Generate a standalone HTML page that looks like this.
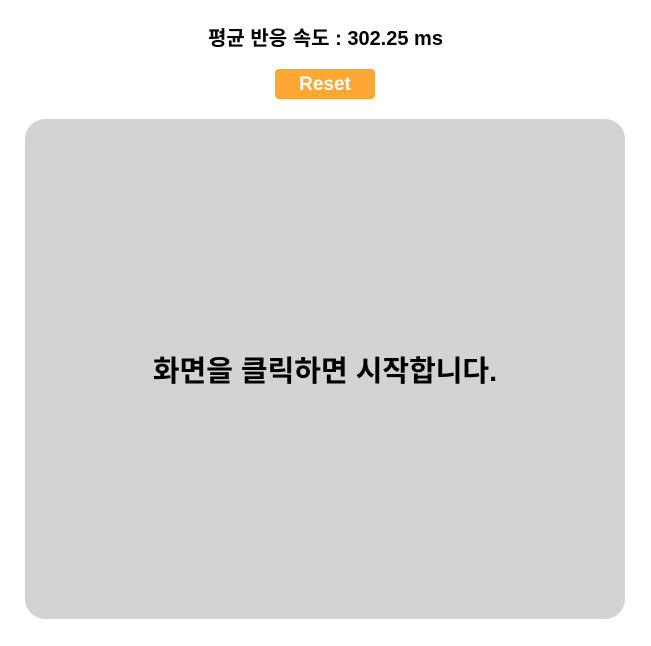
<!DOCTYPE html>
<html><head><meta charset="utf-8"><style>
body{margin:0;width:651px;height:646px;background:#fff;font-family:"Liberation Sans","Noto Sans CJK KR",sans-serif;position:relative;overflow:hidden}
.t{position:absolute;top:26px;left:0;width:651px;text-align:center;font-size:20px;font-weight:bold;color:#000;line-height:26px}
.b{position:absolute;left:275px;top:69px;width:100px;height:30px;background:#ffa733;border-radius:4px;color:#fff;font-weight:bold;font-size:19px;line-height:31px;text-align:center}
.box{position:absolute;left:25px;top:119px;width:600px;height:500px;background:#d3d3d3;border-radius:20px;display:flex;align-items:center;justify-content:center}
.box span{font-size:29px;font-weight:bold;color:#000;margin-top:0px}
</style></head><body>
<div class="t">평균 반응 속도 : 302.25 ms</div>
<div class="b">Reset</div>
<div class="box"><span>화면을 클릭하면 시작합니다.</span></div>
</body></html>
